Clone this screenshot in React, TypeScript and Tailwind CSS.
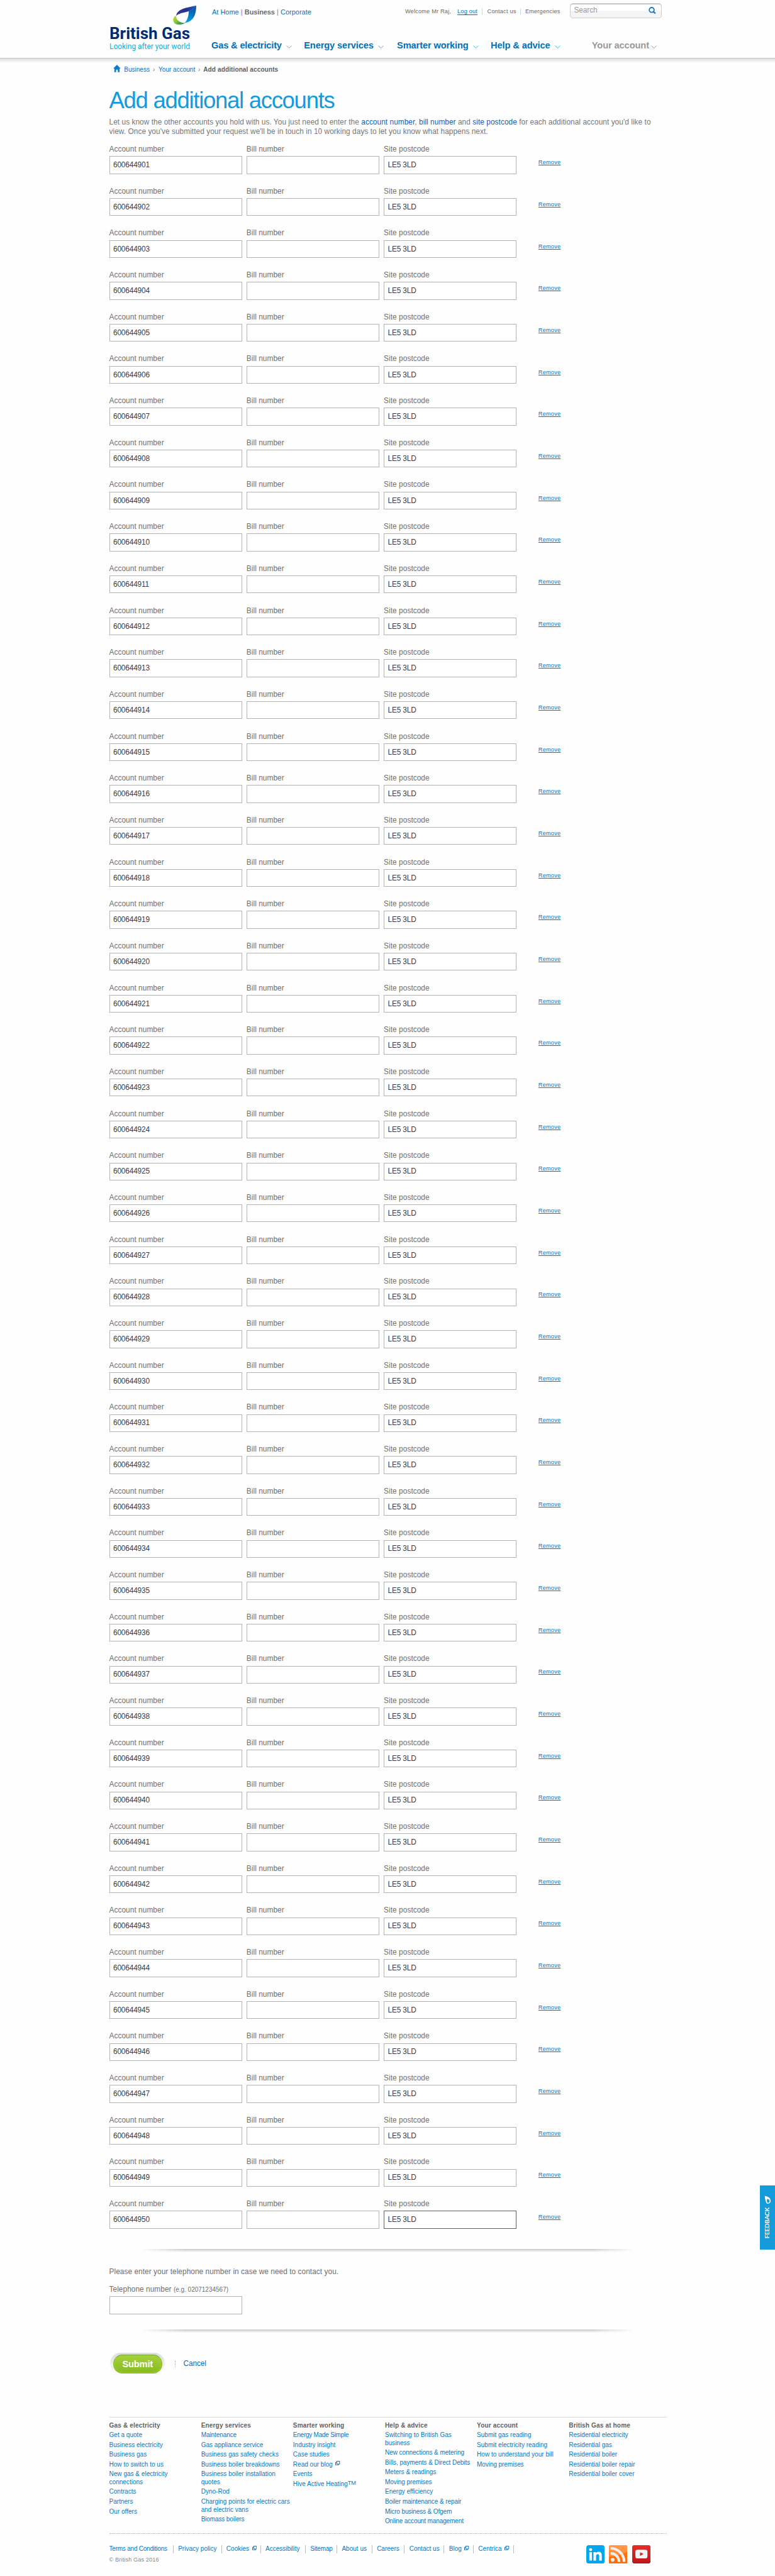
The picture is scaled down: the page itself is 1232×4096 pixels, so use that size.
import React from "react";

const NAV = [
  { label: "Gas & electricity", width: "w-[161px]", track: "tracking-[-0.18px]" },
  { label: "Energy services", width: "w-[162px]", track: "tracking-[-0.1px]" },
  { label: "Smarter working", width: "w-[163px]", track: "tracking-[-0.13px]" },
  { label: "Help & advice", width: "w-[176px]", track: "tracking-[-0.1px]" },
];

const ROWS = Array.from({ length: 50 }, (_, i) => 600644901 + i);

type FooterLink = { text: React.ReactNode; track?: string };

const FOOTER: { title: string; links: FooterLink[] }[] = [
  {
    title: "Gas & electricity",
    links: [
      { text: "Get a quote" },
      { text: "Business electricity" },
      { text: "Business gas" },
      { text: "How to switch to us" },
      { text: <>New gas &amp; electricity<br />connections</> },
      { text: "Contracts" },
      { text: "Partners" },
      { text: "Our offers" },
    ],
  },
  {
    title: "Energy services",
    links: [
      { text: "Maintenance", track: "tracking-[-0.1px]" },
      { text: "Gas appliance service" },
      { text: "Business gas safety checks" },
      { text: "Business boiler breakdowns" },
      { text: <>Business boiler installation<br />quotes</> },
      { text: "Dyno-Rod" },
      { text: <>Charging points for electric cars<br />and electric vans</> },
      { text: "Biomass boilers", track: "tracking-[-0.15px]" },
    ],
  },
  {
    title: "Smarter working",
    links: [
      { text: "Energy Made Simple", track: "tracking-[-0.28px]" },
      { text: "Industry insight" },
      { text: "Case studies" },
      { text: <>Read our blog<ExternalIcon className="ml-[5px] -mt-[5px]" /></> },
      { text: "Events" },
      { text: <>Hive Active Heating<span className="relative -top-[1.5px] text-[10px]">TM</span></> },
    ],
  },
  {
    title: "Help & advice",
    links: [
      { text: <>Switching to British Gas<br />business</> },
      { text: "New connections & metering", track: "tracking-[-0.07px]" },
      { text: "Bills, payments & Direct Debits", track: "tracking-[-0.07px]" },
      { text: "Meters & readings" },
      { text: "Moving premises", track: "tracking-[-0.1px]" },
      { text: "Energy efficiency" },
      { text: "Boiler maintenance & repair", track: "tracking-[-0.1px]" },
      { text: "Micro business & Ofgem", track: "tracking-[-0.15px]" },
      { text: "Online account management", track: "tracking-[-0.15px]" },
    ],
  },
  {
    title: "Your account",
    links: [
      { text: "Submit gas reading" },
      { text: "Submit electricity reading" },
      { text: "How to understand your bill" },
      { text: "Moving premises", track: "tracking-[-0.1px]" },
    ],
  },
  {
    title: "British Gas at home",
    links: [
      { text: "Residential electricity" },
      { text: "Residential gas" },
      { text: "Residential boiler" },
      { text: "Residential boiler repair" },
      { text: "Residential boiler cover" },
    ],
  },
];

const LEGAL = [
  { label: "Terms and Conditions", width: "w-[112px]", track: "tracking-[-0.26px]" },
  { label: "Privacy policy", width: "w-[84px] pl-[8px]" },
  { label: "Cookies", width: "w-[68px] pl-[8px]", external: true },
  { label: "Accessibility", width: "w-[78px] pl-[8px]" },
  { label: "Sitemap", width: "w-[55px] pl-[8px]", track: "tracking-[-0.2px]" },
  { label: "About us", width: "w-[61px] pl-[8px]" },
  { label: "Careers", width: "w-[56.5px] pl-[8px]" },
  { label: "Contact us", width: "w-[69px] pl-[8px]" },
  { label: "Blog", width: "w-[51px] pl-[8px]", external: true },
  { label: "Centrica", width: "w-[70px] pl-[8px]", external: true },
];

function ExternalIcon({ className = "" }: { className?: string }) {
  return (
    <svg className={`inline-block h-[8px] w-[8px] ${className}`} viewBox="0 0 8 8" fill="none" stroke="#005ca8" strokeWidth="1">
      <path d="M2.5 .5h5v5h-5z" />
      <path d="M2.5 2.5h-2v5h5v-2" />
    </svg>
  );
}

function Chevron({ className = "" }: { className?: string }) {
  return (
    <svg className={`h-[6px] w-[10px] ${className}`} viewBox="0 0 10 6" fill="none" stroke="#1ba4dd" strokeWidth=".9">
      <path d="M.6 .8 5 5.1 9.4 .8" />
    </svg>
  );
}

function Logo() {
  return (
    <svg className="mt-[8px] h-[84px] w-[155px] shrink-0" viewBox="60 24 465 252">
      <defs>
        <linearGradient id="band" x1="0" y1="0" x2="1" y2="0">
          <stop offset="0" stopColor="#2a3a94" />
          <stop offset=".5" stopColor="#2b2f90" />
          <stop offset="1" stopColor="#0a66b0" />
        </linearGradient>
        <linearGradient id="blade" x1=".7" y1="0" x2=".3" y2="1">
          <stop offset="0" stopColor="#14509f" />
          <stop offset=".5" stopColor="#0077c4" />
          <stop offset="1" stopColor="#00a9ea" />
        </linearGradient>
        <linearGradient id="leaf" x1="0" y1="0" x2="1" y2=".9">
          <stop offset="0" stopColor="#d3dc36" />
          <stop offset=".45" stopColor="#8cc63f" />
          <stop offset="1" stopColor="#00853e" />
        </linearGradient>
      </defs>
      <path d="M407 83C395 87 391 100 394 112C399 130 424 136 456 121C430 122 409 108 407 83Z" fill="url(#leaf)" />
      <path d="M513 30C514 78 497 116 452 121C466 108 474 86 474 59C490 52 503 42 513 30Z" fill="url(#blade)" />
      <path d="M513 30C462 42 414 47 408 84C420 69 448 68 475 59C492 52 504 42 513 30Z" fill="url(#band)" />
      <text x="60" y="205" textLength="421" lengthAdjust="spacingAndGlyphs" fill="#002d72" fontFamily="Roboto, sans-serif" fontWeight="700" fontSize="86">British Gas</text>
      <text x="60" y="258" textLength="420" lengthAdjust="spacingAndGlyphs" fill="#00b2e8" fontFamily="Roboto, sans-serif" fontSize="42">Looking after your world</text>
    </svg>
  );
}

function Header() {
  return (
    <header>
      <div className="flex h-[101px] pl-[190px]">
        <Logo />
        <div className="ml-[24px] flex w-[783px] flex-col">
          <div className="flex h-[69.5px] items-start">
            <div className="mt-[12.8px] whitespace-nowrap text-[12px] leading-[16px] text-[#b04fb8]">
              <a className="text-[#0072c6]">At Home</a>
              <span className="mx-[3.5px]">|</span>
              <a className="font-bold tracking-[-0.1px] text-[#6b6b6b]">Business</a>
              <span className="mx-[3.5px]">|</span>
              <a className="text-[#0072c6]">Corporate</a>
            </div>
            <div className="ml-auto mt-[12px] flex whitespace-nowrap text-[10px] leading-[16px] tracking-[0.25px] text-[#666]">
              <span className="w-[91px]">Welcome Mr Raj,</span>
              <a className="w-[43px] text-[#0072bc] underline underline-offset-[2px]">Log out</a>
              <a className="my-[3px] w-[66px] border-l border-[#d0d0d0] pl-[8px] leading-[10px]">Contact us</a>
              <a className="my-[3px] w-[87px] border-l border-[#d0d0d0] pl-[8px] leading-[10px]">Emergencies</a>
            </div>
            <div className="mt-[5px] flex h-[27px] w-[160px] items-center justify-between rounded-[5px] border-2 border-[#cfcfcf] bg-gradient-to-b from-white from-50% to-[#f5f5f5] to-50% pb-px pl-[6px] pr-[9px] shadow-[inset_0_1px_1px_#bbb]">
              <span className="text-[13px] tracking-[-0.1px] text-[#999]">Search</span>
              <svg className="h-[12px] w-[13px]" viewBox="0 0 13 12" fill="none" stroke="#0b7ac8" strokeWidth="2">
                <circle cx="5.5" cy="5.3" r="4.2" />
                <path d="M8 8l4 3.3" strokeWidth="2.4" />
              </svg>
            </div>
          </div>
          <nav className="-ml-px flex whitespace-nowrap text-[16px] font-bold leading-[20px] text-[#0070ba]">
            {NAV.map((n) => (
              <a key={n.label} className={`flex items-start ${n.width}`}>
                <span className={n.track}>{n.label}</span>
                <Chevron className="ml-[8px] mt-[9px]" />
              </a>
            ))}
            <a className="flex items-start text-[#999]">
              <span className="tracking-[-0.1px]">Your account</span>
              <Chevron className="ml-[3px] mt-[9px]" />
            </a>
          </nav>
        </div>
      </div>
      <div className="h-[8px] border-t border-[#c9c9c9] bg-gradient-to-b from-[#dcdcdc] to-[#fefefe]" />
    </header>
  );
}

function Breadcrumb() {
  return (
    <div className="mt-[6px] flex h-[14px] items-start whitespace-nowrap pl-[7px] text-[11px] leading-[14px] text-[#0072c6]">
      <svg className="-mt-[2px] mr-[6px] h-[13px] w-[13px]" viewBox="0 0 13 13" fill="#0a7cc9">
        <path d="M6.5 0 13 6.6H11V13H8V8.6H5V13H2V6.6H0Z" />
      </svg>
      <a className="w-[50px]">Business</a>
      <span className="w-[10px] text-[#777]">›</span>
      <a className="w-[69px]">Your account</a>
      <span className="w-[9px] text-[#777]">›</span>
      <span className="font-bold tracking-[0.12px] text-[#5f5f5f]">Add additional accounts</span>
    </div>
  );
}

function Field({ label, value = "", active = false }: { label: string; value?: string; active?: boolean }) {
  return (
    <label className="block w-[231px]">
      <span className="block h-[20px] whitespace-nowrap leading-[16px] tracking-[0.06px]">{label}</span>
      <span
        className={`flex h-[31px] items-center border bg-white pl-[6px] tracking-[-0.18px] text-[#3c3c3c] ${
          active ? "border-[#5f5f5f]" : "border-[#b3b3b3]"
        }`}
      >
        {value}
      </span>
    </label>
  );
}

function Divider() {
  return (
    <div className="ml-[55px] h-[5px] w-[860px] bg-gradient-to-b from-[#c6c6c6] to-[#fbfbfb] [mask-image:linear-gradient(to_right,transparent,black_9%,black_91%,transparent)]" />
  );
}

function SocialIcons() {
  return (
    <div className="mr-[28px] flex gap-[8px]">
      <svg className="h-[32px] w-[32px]" viewBox="0 0 32 32">
        <rect width="32" height="32" rx="4.5" fill="#00a6ee" />
        <g fill="#fff">
          <circle cx="7.5" cy="7.8" r="2.7" />
          <path d="M5.3 12h4.5v14.7H5.3z" />
          <path d="M12.5 12h4.3v2c1-1.6 2.5-2.4 4.6-2.4 4.3 0 5.6 2.7 5.6 6.9v8.2h-4.5v-7.4c0-2.2-.5-3.8-2.5-3.8s-3 1.5-3 3.700v7.5h-4.5z" />
        </g>
      </svg>
      <svg className="h-[32px] w-[32px]" viewBox="0 0 32 32">
        <defs>
          <linearGradient id="rss" x1="0" y1="0" x2="0" y2="1">
            <stop offset="0" stopColor="#ff9a4d" />
            <stop offset="1" stopColor="#ff7f22" />
          </linearGradient>
        </defs>
        <rect width="32" height="32" rx="2" fill="url(#rss)" />
        <path d="M0 20C12 20 24 16 32 11V30a2 2 0 0 1-2 2H2a2 2 0 0 1-2-2Z" fill="#ff6a00" fillOpacity=".85" />
        <circle cx="6.5" cy="25.5" r="3.3" fill="#eee" />
        <path d="M3 14.3A14.500 14.500 0 0 1 17.700 29M3 5.500A23.500 23.500 0 0 1 26.500 29" fill="none" stroke="#eee" strokeWidth="4.6" />
      </svg>
      <svg className="h-[32px] w-[32px]" viewBox="0 0 32 32">
        <defs>
          <linearGradient id="yt" x1="0" y1="0" x2="0" y2="1">
            <stop offset="0" stopColor="#e52d27" />
            <stop offset="1" stopColor="#bf171d" />
          </linearGradient>
        </defs>
        <rect width="32" height="32" rx="4.5" fill="#8f1317" />
        <rect width="32" height="31" rx="4.5" fill="url(#yt)" />
        <rect x="5.5" y="8" width="21" height="15" rx="3.5" fill="#f3f3f3" />
        <path d="M13.7 12.3v6.2l6-3.1z" fill="#cf2025" />
      </svg>
    </div>
  );
}

function Footer() {
  return (
    <footer className="mt-[74px] text-[11px] leading-[14px] text-[#0078c8]">
      <div className="flex h-[202px] border-t border-[#d9d9d9] pt-[7.2px]">
        {FOOTER.map((c) => (
          <div key={c.title} className="w-[160px] whitespace-nowrap">
            <h3 className="font-bold tracking-[0.17px] text-[#626262]">{c.title}</h3>
            <ul>
              {c.links.map((l, i) => (
                <li key={i} className={`mt-[3px] ${l.track ?? ""}`}>
                  {l.text}
                </li>
              ))}
            </ul>
          </div>
        ))}
      </div>
      <div className="border-t border-dotted border-[#b5b5b5]" />
      <div className="mt-[20px] flex items-start justify-between">
        <div>
          <div className="flex whitespace-nowrap">
            {LEGAL.map((l) => (
              <a key={l.label} className={`border-r border-[#bcbcbc] ${l.width}`}>
                <span className={l.track}>{l.label}</span>
                {l.external && <ExternalIcon className="-mt-[4px] ml-[5px]" />}
              </a>
            ))}
          </div>
          <p className="mt-[5px] text-[10px] tracking-[0.15px] text-[#888]">© British Gas 2016</p>
        </div>
        <SocialIcons />
      </div>
    </footer>
  );
}

export default function App() {
  return (
    <div className="relative h-[4484px] w-full overflow-hidden bg-[#fefefe] font-['Liberation_Sans',Arial,sans-serif] text-[13px] leading-[16px] text-[#6f6f6f] [zoom:0.9134]">
      <Header />
      <main className="ml-[190px] w-[970px]">
        <Breadcrumb />
        <h1 className="mt-[27px] whitespace-nowrap text-[40px] leading-[40px] tracking-[-1.42px] text-[#149bdf]">Add additional accounts</h1>
        <p className="mt-[8.8px] whitespace-nowrap tracking-[0.055px] text-[#777]">
          Let us know the other accounts you hold with us. You just need to enter the{" "}
          <span className="text-[#0a5fc4]">account number</span>, <span className="text-[#0a5fc4]">bill number</span> and{" "}
          <span className="text-[#0a5fc4]">site postcode</span> for each additional account you'd like to
          <br />
          view. Once you've submitted your request we'll be in touch in 10 working days to let you know what happens next.
        </p>
        <div className="mt-[15.2px]">
          {ROWS.map((n, i) => (
            <div key={n} className="flex h-[73px] gap-[8px]">
              <Field label="Account number" value={String(n)} />
              <Field label="Bill number" />
              <Field label="Site postcode" value="LE5 3LD" active={i === ROWS.length - 1} />
              <div className="ml-[30px] mt-[24.2px]">
                <a className="block text-[10px] leading-[14px] tracking-[0.3px] text-[#0078c0] underline decoration-[#5f5f5f] underline-offset-[1.5px]">
                  Remove
                </a>
              </div>
            </div>
          ))}
        </div>
        <div className="mt-[14px]">
          <Divider />
        </div>
        <p className="mt-[25.7px] tracking-[0.055px]">Please enter your telephone number in case we need to contact you.</p>
        <label className="mt-[15px] block w-[231px]">
          <span className="block h-[20.2px] whitespace-nowrap tracking-[0.055px]">
            Telephone number <span className="text-[11px] tracking-[-0.03px]">(e.g. 02071234567)</span>
          </span>
          <span className="block h-[31px] border border-[#b3b3b3] bg-white" />
        </label>
        <div className="mt-[27px]">
          <Divider />
        </div>
        <div className="mt-[35px] flex h-[38px] items-start pl-[2px]">
          <span className="flex h-[38px] w-[95px] justify-center rounded-[19px] bg-gradient-to-b from-[#dcdcdc] to-[#fdfdfd] pt-[4px]">
            <button className="h-[32px] w-[85px] rounded-[16px] border border-[#8cbf26] border-t-[#6fa52c] bg-gradient-to-b from-[#a5d13c] to-[#86bb20] text-[16px] font-bold tracking-[-0.15px] text-white shadow-[inset_0_0_4px_#a8d62c]">
              Submit
            </button>
          </span>
          <span className="ml-[17px] mt-[14px] h-[12px] border-l border-dotted border-[#aaa]" />
          <a className="ml-[14px] mt-[11.5px] tracking-[-0.1px] text-[#0072c6]">Cancel</a>
        </div>
        <Footer />
      </main>
      <aside className="absolute right-0 top-[3805px] flex h-[111px] w-[26px] flex-col items-center bg-[#149bdc] pt-[17px] text-white">
        <svg className="h-[15px] w-[12px]" viewBox="0 0 12 15" fill="none" stroke="#fff">
          <path d="M.8 .8C5 1.5 11 3 11 9.5 11 13 7.5 14.5 4.5 14.2 2.5 11 1 6 .8 .8Z" fill="#fff" stroke="none" />
          <path d="M5 6C8 6 9.5 8 9.2 10.5 8.5 12.7 7 13 5.5 12.5 4 10.5 4 8 5 6Z" fill="#149bdc" stroke="none" />
        </svg>
        <span className="mt-[6px] rotate-180 whitespace-nowrap font-[Lato] text-[10.5px] font-bold leading-[12px] [writing-mode:vertical-rl]">FEEDBACK</span>
      </aside>
    </div>
  );
}
